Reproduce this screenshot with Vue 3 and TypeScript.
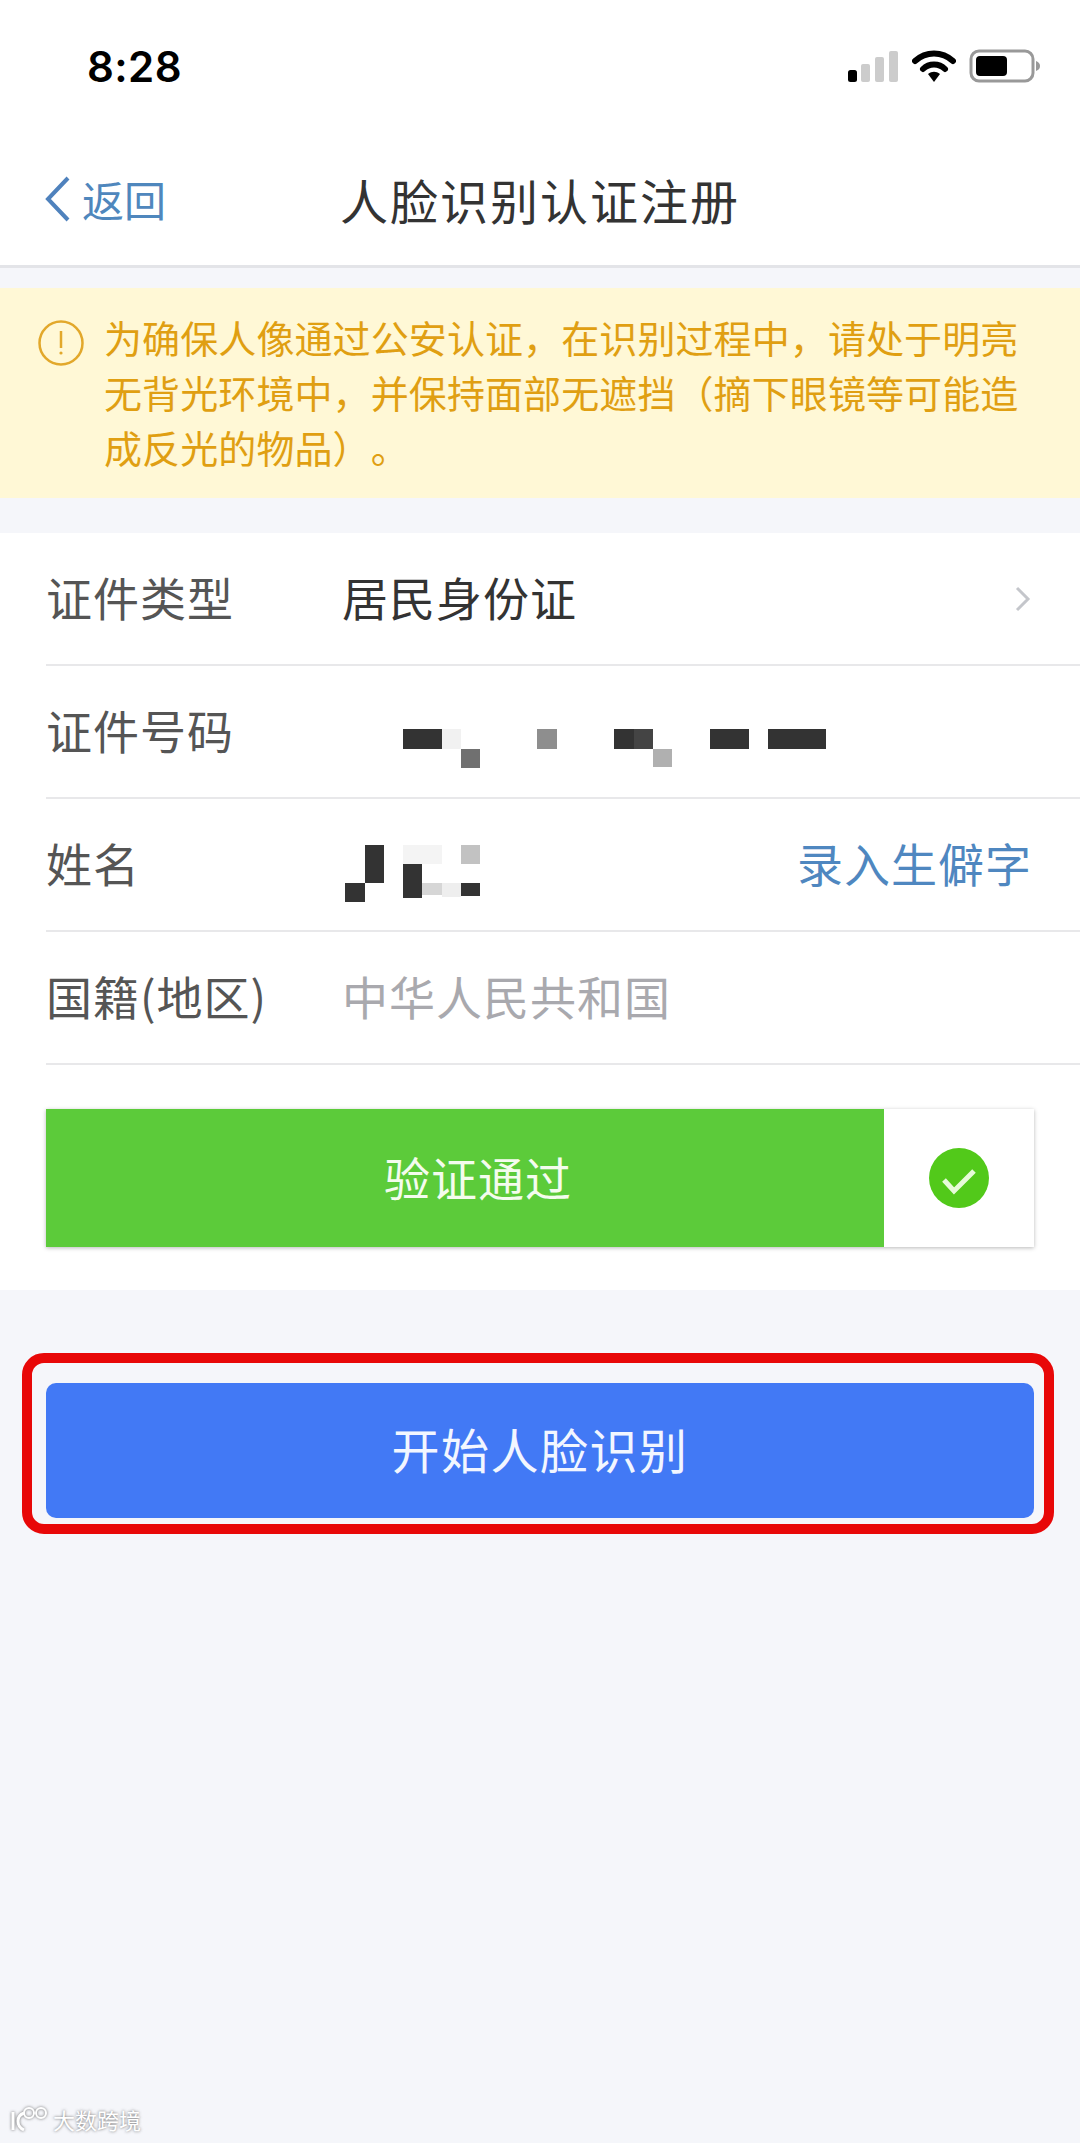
<script setup lang="ts">
interface Cell {
  x: number
  y: number
  w: number
  h: number
  c: string
}

// 打碼區塊, 座標對應整列的 viewBox
const idCells: Cell[] = [
  { x: 403, y: 729, w: 39, h: 20, c: '#333' },
  { x: 442, y: 729, w: 19, h: 20, c: '#f1f1f1' },
  { x: 461, y: 749, w: 19, h: 19, c: '#707070' },
  { x: 537, y: 729, w: 20, h: 20, c: '#8e8e8e' },
  { x: 614, y: 729, w: 20, h: 20, c: '#333' },
  { x: 634, y: 729, w: 19, h: 20, c: '#444' },
  { x: 653, y: 749, w: 19, h: 18, c: '#b0b0b0' },
  { x: 710, y: 729, w: 39, h: 20, c: '#333' },
  { x: 768, y: 729, w: 58, h: 20, c: '#333' }
]

const nameCells: Cell[] = [
  { x: 365, y: 845, w: 19, h: 38, c: '#333' },
  { x: 345, y: 883, w: 20, h: 19, c: '#333' },
  { x: 403, y: 845, w: 39, h: 19, c: '#f4f4f4' },
  { x: 403, y: 864, w: 19, h: 34, c: '#333' },
  { x: 422, y: 883, w: 20, h: 12, c: '#d6d6d6' },
  { x: 442, y: 883, w: 19, h: 14, c: '#eee' },
  { x: 461, y: 845, w: 19, h: 19, c: '#c2c2c2' },
  { x: 461, y: 883, w: 19, h: 13, c: '#333' }
]
</script>

<template>
  <div class="page">
    <div class="status-bar">
      <span class="time">8:28</span>
      <div class="status-icons">
        <svg width="52" height="32" viewBox="0 0 52 32">
          <rect x="1" y="20" width="9" height="12" rx="2.5" fill="#000" />
          <rect x="14" y="14" width="9" height="18" rx="2" fill="#ccc" />
          <rect x="28" y="7" width="9" height="25" rx="2" fill="#ccc" />
          <rect x="42" y="1" width="9" height="31" rx="2" fill="#ccc" />
        </svg>
        <svg width="44" height="32" viewBox="0 0 44 32">
          <path d="M3 11 C14 1 30 1 41 11" fill="none" stroke="#000" stroke-width="6" stroke-linecap="round" />
          <path d="M11 19 C17 13 27 13 33 19" fill="none" stroke="#000" stroke-width="6" stroke-linecap="round" />
          <path d="M16 24 C20 21 24 21 28 24 L22 32 Z" fill="#000" />
        </svg>
        <svg width="72" height="34" viewBox="0 0 72 34">
          <rect x="2" y="2" width="62" height="30" rx="8" fill="#fff" stroke="#999" stroke-width="3" />
          <rect x="7" y="7" width="31" height="20" rx="4" fill="#000" />
          <path d="M67 12 C70 13 71 15 71 17 C71 19 70 21 67 22 Z" fill="#999" />
        </svg>
      </div>
    </div>

    <header class="nav">
      <div class="back">
        <svg width="28" height="46" viewBox="0 0 28 46">
          <path d="M24 2 L4 23 L24 44" fill="none" stroke="#4f82bd" stroke-width="4" />
        </svg>
        <span>返回</span>
      </div>
      <h1 class="title">人脸识别认证注册</h1>
    </header>

    <div class="notice">
      <svg class="notice-icon" width="46" height="46" viewBox="0 0 46 46">
        <circle cx="23" cy="23" r="21.5" fill="none" stroke="#e2a82b" stroke-width="2.5" />
        <path d="M23 11 V28" stroke="#e2a82b" stroke-width="2.5" />
        <circle cx="23" cy="33" r="1.6" fill="#e2a82b" />
      </svg>
      <p>为确保人像通过公安认证，在识别过程中，请处于明亮无背光环境中，并保持面部无遮挡（摘下眼镜等可能造成反光的物品）。</p>
    </div>

    <section class="form">
      <div class="row">
        <span class="label">证件类型</span>
        <span class="value">居民身份证</span>
        <svg class="chevron" width="18" height="26" viewBox="0 0 18 26">
          <path d="M3 2 L14 13 L3 24" fill="none" stroke="#c4c6cb" stroke-width="3" />
        </svg>
      </div>
      <div class="row">
        <span class="label">证件号码</span>
        <svg class="mosaic" width="600" height="131" viewBox="342 666 600 131">
          <rect v-for="(r, i) in idCells" :key="i" :x="r.x" :y="r.y" :width="r.w" :height="r.h" :fill="r.c" />
        </svg>
      </div>
      <div class="row">
        <span class="label">姓名</span>
        <svg class="mosaic" width="200" height="131" viewBox="342 799 200 131">
          <rect v-for="(r, i) in nameCells" :key="i" :x="r.x" :y="r.y" :width="r.w" :height="r.h" :fill="r.c" />
        </svg>
        <a class="link">录入生僻字</a>
      </div>
      <div class="row">
        <span class="label">国籍(地区)</span>
        <span class="value placeholder">中华人民共和国</span>
      </div>

      <div class="slider">
        <div class="slider-done">验证通过</div>
        <div class="slider-handle">
          <svg width="60" height="60" viewBox="0 0 60 60">
            <circle cx="30" cy="30" r="30" fill="#52c91a" />
            <path d="M15 32 L25 43 L45 23" fill="none" stroke="#e6fbd8" stroke-width="5" />
          </svg>
        </div>
      </div>
    </section>

    <div class="highlight">
      <button class="start">开始人脸识别</button>
    </div>

    <div class="watermark">
      <svg width="40" height="26" viewBox="0 0 40 26">
        <path d="M4 6 V24 M15 7 C7 10 7 20 15 24" fill="none" stroke="#fff" stroke-width="3" />
        <circle cx="20" cy="7" r="5" fill="none" stroke="#fff" stroke-width="2" />
        <circle cx="32" cy="7" r="5" fill="none" stroke="#fff" stroke-width="2" />
      </svg>
      <span>大数跨境</span>
    </div>
  </div>
</template>

<style>
html,
body {
  margin: 0;
  background: #f5f6fa;
}
</style>

<style scoped>
.page {
  position: relative;
  width: 1080px;
  height: 2143px;
  overflow: hidden;
  background: #f5f6fa;
  font-family: "Noto Sans CJK SC", "Liberation Sans", sans-serif;
}

.status-bar {
  height: 132px;
  box-sizing: border-box;
  background: #fff;
  display: flex;
  justify-content: space-between;
  align-items: center;
  padding: 0 39px 0 87px;
}

.time {
  font-family: Inter, "Liberation Sans", sans-serif;
  font-size: 42px;
  font-weight: 600;
  letter-spacing: 0.4px;
  color: #000;
}

.status-icons {
  display: flex;
  align-items: center;
  gap: 13px;
}

.nav {
  height: 136px;
  box-sizing: border-box;
  background: #fff;
  border-bottom: 3px solid #e3e4e8;
  display: flex;
  align-items: center;
  position: relative;
}

.back {
  display: flex;
  align-items: center;
  gap: 10px;
  margin-left: 44px;
  color: #4f87bd;
  font-size: 42px;
}

.title {
  position: absolute;
  left: 340px;
  margin: 0;
  font-size: 48px;
  font-weight: 400;
  letter-spacing: 2px;
  color: #333;
}

.notice {
  margin-top: 20px;
  height: 210px;
  box-sizing: border-box;
  background: #fff8d6;
  display: flex;
  padding: 21px 30px 0 38px;
  gap: 20px;
  color: #e09f12;
}

.notice-icon {
  flex: none;
  margin-top: 11px;
}

.notice p {
  margin: 0;
  font-size: 38px;
  line-height: 55px;
  letter-spacing: 0.1px;
  text-spacing-trim: space-all;
}

.form {
  margin-top: 35px;
  background: #fff;
  padding: 0 0 43px 46px;
}

.row {
  height: 133px;
  box-sizing: border-box;
  border-bottom: 2px solid #e8e8ea;
  display: flex;
  align-items: center;
  padding-right: 48px;
  font-size: 46px;
  letter-spacing: 1px;
}

.label {
  flex: none;
  width: 296px;
  margin-bottom: 5px;
  color: #555;
}

.value {
  margin-bottom: 5px;
  color: #333;
}

.placeholder {
  color: #a9a9ae;
}

.mosaic {
  flex: none;
}

.chevron,
.link {
  margin-left: auto;
}

.link {
  margin-bottom: 5px;
  color: #4f87c0;
}

.slider {
  margin-top: 44px;
  width: 988px;
  height: 138px;
  display: flex;
  background: #fff;
  box-shadow: 0 1px 4px rgba(0, 0, 0, 0.28);
}

.slider-done {
  flex: none;
  width: 838px;
  box-sizing: border-box;
  padding: 0 0 5px 26px;
  background: #5ccb3a;
  color: #f4fcee;
  font-size: 46px;
  letter-spacing: 1px;
  display: flex;
  align-items: center;
  justify-content: center;
}

.slider-handle {
  flex: 1;
  display: flex;
  align-items: center;
  justify-content: center;
}

.highlight {
  margin: 63px 0 0 22px;
  width: 1032px;
  height: 181px;
  box-sizing: border-box;
  border: 10px solid #e80808;
  border-radius: 22px;
  padding: 20px 10px 0 14px;
}

.start {
  display: block;
  width: 100%;
  height: 135px;
  border: 0;
  border-radius: 10px;
  padding: 0 0 5px;
  background: #4279f5;
  color: #f2f6ff;
  font-family: inherit;
  font-size: 48px;
  letter-spacing: 1.5px;
}

/* 圖片水印 */
.watermark {
  position: absolute;
  left: 9px;
  bottom: 8px;
  display: flex;
  align-items: center;
  gap: 4px;
  color: #fff;
  font-size: 22px;
  text-shadow: 0 0 3px rgba(70, 70, 70, 0.8);
}

.watermark svg {
  filter: drop-shadow(0 0 1.5px rgba(70, 70, 70, 0.8));
}
</style>
